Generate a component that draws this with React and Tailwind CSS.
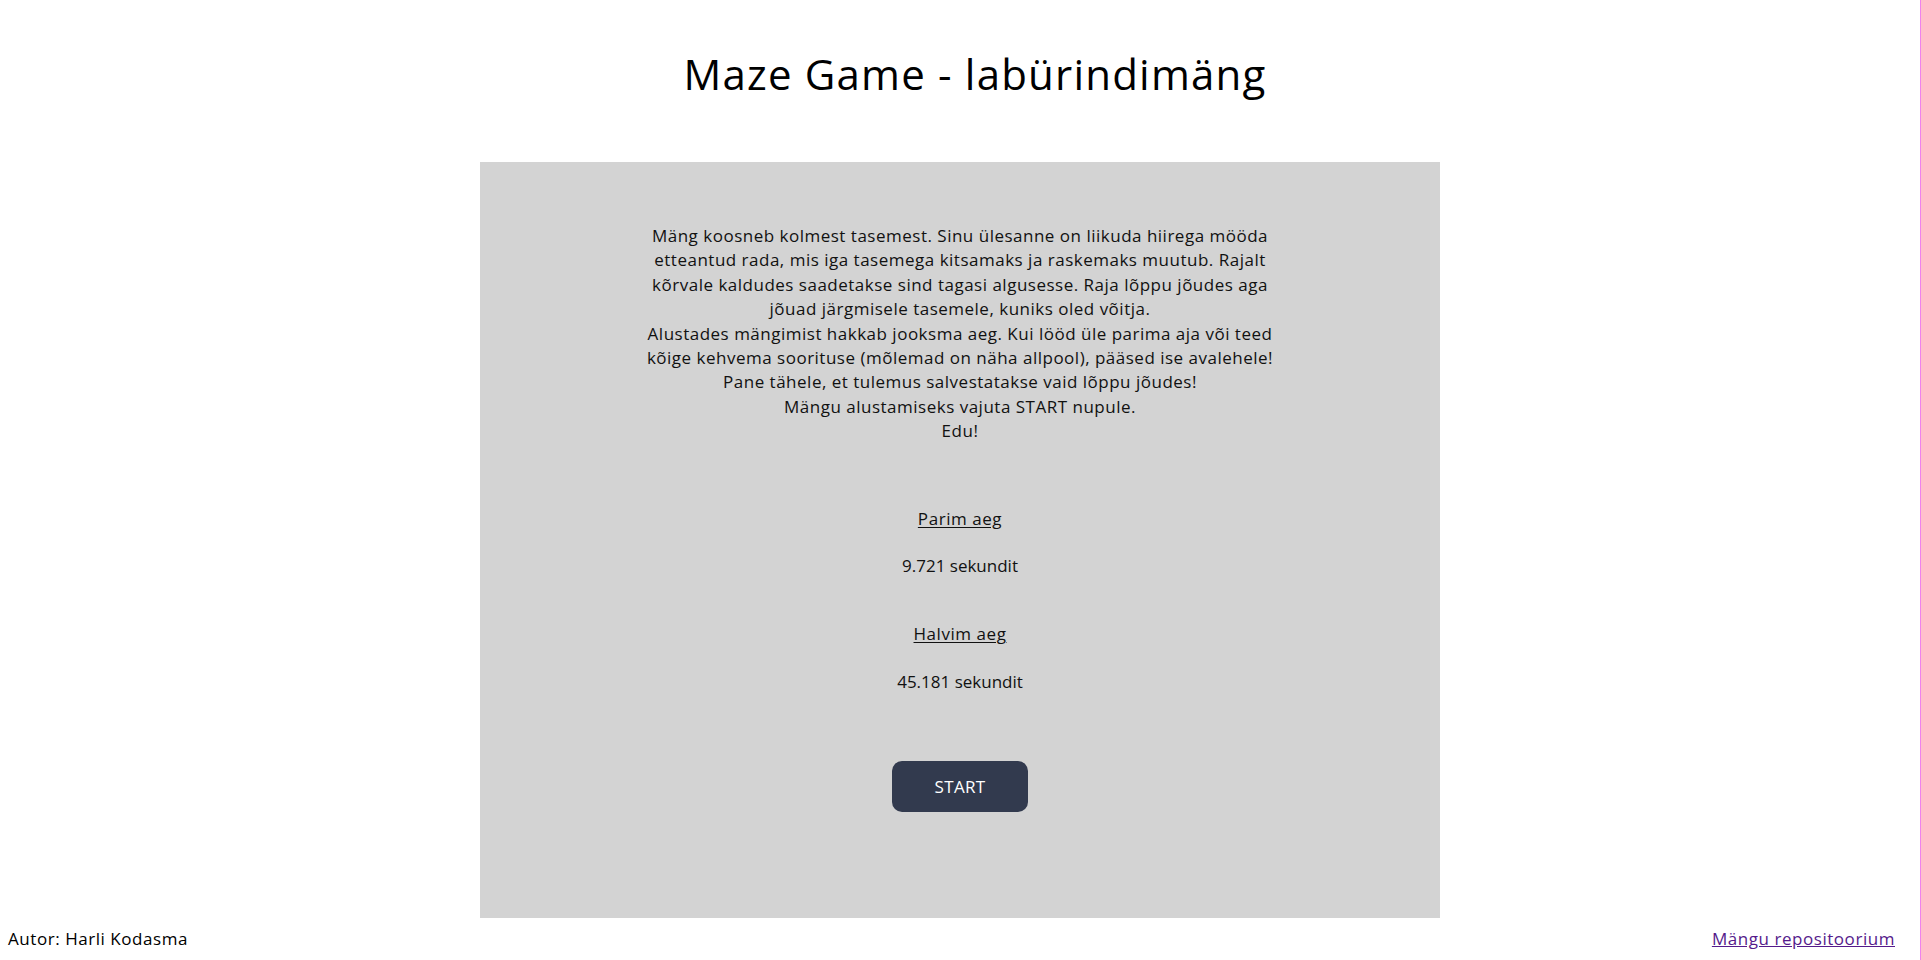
import React from 'react';

const introLines = [
  'Mäng koosneb kolmest tasemest. Sinu ülesanne on liikuda hiirega mööda',
  'etteantud rada, mis iga tasemega kitsamaks ja raskemaks muutub. Rajalt',
  'kõrvale kaldudes saadetakse sind tagasi algusesse. Raja lõppu jõudes aga',
  'jõuad järgmisele tasemele, kuniks oled võitja.',
  'Alustades mängimist hakkab jooksma aeg. Kui lööd üle parima aja või teed',
  'kõige kehvema soorituse (mõlemad on näha allpool), pääsed ise avalehele!',
  'Pane tähele, et tulemus salvestatakse vaid lõppu jõudes!',
  'Mängu alustamiseks vajuta START nupule.',
  'Edu!',
];

function App() {
  return (
    <div
      className="h-[960px] flex flex-col bg-white text-black border-r border-[#ee82ee]"
      style={{ fontFamily: '"Open Sans", "DejaVu Sans", sans-serif' }}
    >
      <h1 className="mt-[49px] h-[50px] leading-[50px] text-[42px] tracking-[1.2px] text-center pl-[30px] font-normal">
        Maze Game - labürindimäng
      </h1>

      <main className="mt-[63px] mx-auto w-[960px] h-[756px] bg-[#d3d3d3] flex flex-col items-center text-[#111]">
        <p className="mt-[62px] text-[17px] tracking-[0.5px] leading-[24.4px] text-center">
          {introLines.map((line, i) => (
            <span key={i} className="block whitespace-nowrap">{line}</span>
          ))}
        </p>

        <div className="mt-[63px] text-[17px] tracking-[0.55px] leading-[24.4px] text-center">
          <p className="underline underline-offset-2">Parim aeg</p>
          <p className="mt-[23px] tracking-normal">9.721 sekundit</p>
          <p className="mt-[44px] underline underline-offset-2">Halvim aeg</p>
          <p className="mt-[23px] tracking-normal">45.181 sekundit</p>
        </div>

        <button className="mt-[67px] w-[136px] h-[51px] rounded-[10px] bg-[#323a4e] text-white text-[17px] tracking-[0.3px]">
          START
        </button>
      </main>

      <footer className="flex justify-between items-center pl-2 pr-[25px] h-[42px] text-[17px] tracking-[0.55px]">
        <span>Autor: Harli Kodasma</span>
        <a href="#" className="underline text-[#551a8b]">Mängu repositoorium</a>
      </footer>
    </div>
  );
}

export default App;
